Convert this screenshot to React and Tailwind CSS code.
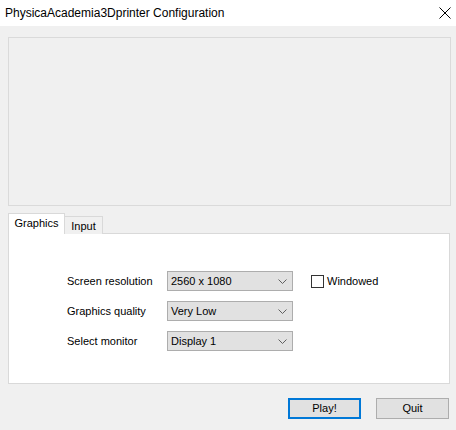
import React from 'react'

const ui = { fontFamily: '"Liberation Sans", Arial, sans-serif' }

function Chevron() {
  return (
    <svg width="9" height="5" viewBox="0 0 9 5" className="text-[#606060]">
      <path d="M0.5 0.5 L4.5 4.5 L8.5 0.5" fill="none" stroke="currentColor" strokeWidth="1" />
    </svg>
  )
}

function Select({ value }) {
  return (
    <div className="w-[126px] h-[20px] bg-[#e1e1e1] border border-[#adadad] flex items-center justify-between pl-[3px] pr-[5px] text-[11px] text-black">
      <span>{value}</span>
      <Chevron />
    </div>
  )
}

function Row({ label, value, children }) {
  return (
    <div className="flex items-center h-[20px]">
      <span className="w-[100px] text-[11px] text-black">{label}</span>
      <Select value={value} />
      {children}
    </div>
  )
}

export default function App() {
  return (
    <div className="w-[456px] h-[430px] bg-[#f0f0f0] flex flex-col" style={ui}>
      {/* title bar */}
      <div className="h-[26px] bg-white flex items-center justify-between pl-[5px] pr-[4px]">
        <span className="text-[12px] text-black">PhysicaAcademia3Dprinter Configuration</span>
        <svg width="12" height="12" viewBox="0 0 12 12" className="mr-[1px]">
          <path d="M0.5 0.5 L11.5 11.5 M11.5 0.5 L0.5 11.5" stroke="#000" strokeWidth="1" />
        </svg>
      </div>

      {/* banner area */}
      <div className="ml-[8px] mt-[11px] w-[443px] h-[169px] border border-[#dadada] bg-[#f0f0f0]" />

      {/* tabs */}
      <div className="ml-[8px] mt-[7px] flex items-end h-[21px] relative z-10">
        <div className="h-[21px] w-[57px] bg-white border border-b-0 border-[#d9d9d9] flex items-center justify-center text-[11px] text-black pb-[1px]">
          Graphics
        </div>
        <div className="h-[18px] w-[38px] bg-[#f0f0f0] border border-l-0 border-b-0 border-[#d9d9d9] flex items-center justify-center text-[11px] text-black pt-[1px]">
          Input
        </div>
      </div>
      <div className="ml-[8px] -mt-[1px] w-[442px] h-[151px] bg-white border border-[#d9d9d9] flex flex-col gap-[10px] pt-[37px] pl-[58px]">
        <Row label="Screen resolution" value="2560 x 1080">
          <div className="ml-[18px] flex items-center gap-[3px]">
            <div className="w-[13px] h-[13px] border border-[#333333] bg-white" />
            <span className="text-[11px] text-black">Windowed</span>
          </div>
        </Row>
        <Row label="Graphics quality" value="Very Low" />
        <Row label="Select monitor" value="Display 1" />
      </div>

      {/* buttons */}
      <div className="mt-[14px] flex justify-end gap-[15px] pr-[7px]">
        <button className="w-[73px] h-[21px] bg-[#e1e1e1] border-2 border-[#0078d7] text-[11px] text-black flex items-center justify-center">
          Play!
        </button>
        <button className="w-[73px] h-[21px] bg-[#e1e1e1] border border-[#adadad] text-[11px] text-black flex items-center justify-center">
          Quit
        </button>
      </div>
    </div>
  )
}
